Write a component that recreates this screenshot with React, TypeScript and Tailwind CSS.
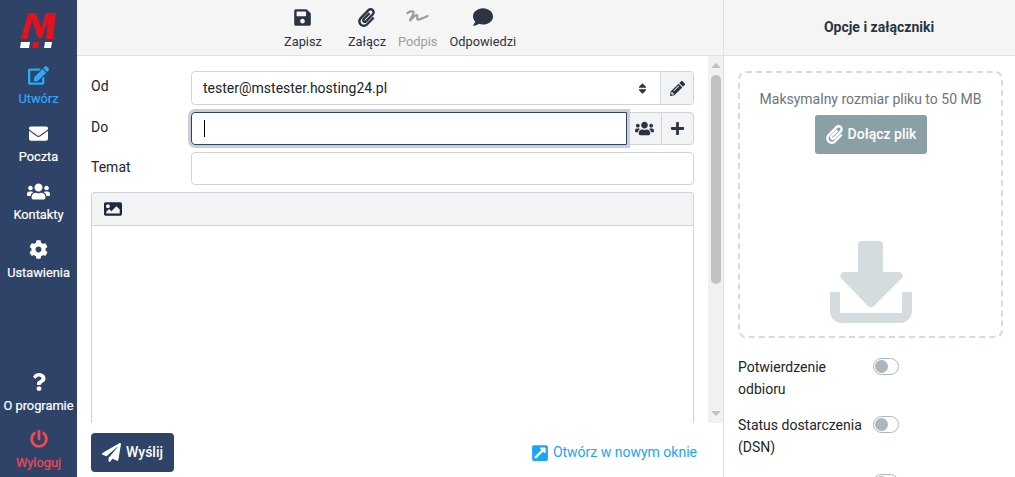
import type { ReactNode } from "react";
import {
  FaCog,
  FaComment,
  FaEdit,
  FaEnvelope,
  FaExternalLinkSquareAlt,
  FaImage,
  FaPaperPlane,
  FaPaperclip,
  FaPencilAlt,
  FaPlus,
  FaPowerOff,
  FaQuestion,
  FaSave,
  FaSort,
  FaUsers,
} from "react-icons/fa";

function SideItem({ icon, label, color = "text-white" }: { icon: ReactNode; label: string; color?: string }) {
  return (
    <div className={`flex flex-col items-center h-[58px] ${color}`}>
      <div className="h-[24px] flex items-center justify-center">{icon}</div>
      <span className="text-[12.8px] leading-[20px] mt-[2px] whitespace-nowrap [-webkit-text-stroke:0.2px]">{label}</span>
    </div>
  );
}

function ToolItem({ icon, label, muted }: { icon: ReactNode; label: string; muted?: boolean }) {
  return (
    <div className={`flex flex-col items-center ${muted ? "text-[#9a9da0]" : "text-[#2b3440]"}`}>
      <div className="h-[22px] flex items-center justify-center">{icon}</div>
      <span className="text-[12.8px] leading-[16px] mt-[6px]">{label}</span>
    </div>
  );
}

function Toggle() {
  return (
    <div className="w-[26px] h-[17px] rounded-full border border-[#adb5bd] bg-white flex items-center pl-[1px] shrink-0">
      <div className="w-[13px] h-[13px] rounded-full bg-[#adb5bd]" />
    </div>
  );
}

export default function App() {
  return (
    <div className="w-[1015px] h-[477px] flex overflow-hidden bg-white font-['Roboto',sans-serif]">
      {/* sidebar */}
      <div className="w-[77px] h-full bg-[#2f4369] flex flex-col items-center shrink-0">
        <svg width="37" height="35" viewBox="0 0 37 35" className="mt-[13px] mb-[15px]">
          <polygon points="1,26 8,0 16,0 21,15 26,0 36,0 33,26 26,26 28,7 22,25 18,25 12,7 7,26" fill="#e2131e" />
          <polygon points="1,29 10,29 9,35 0,35" fill="#fff" />
          <polygon points="13,29 19,29 18,35 12,35" fill="#e2131e" />
          <polygon points="25,29 32,29 31,35 24,35" fill="#fff" />
        </svg>
        <SideItem icon={<FaEdit className="text-[21px]" />} label="Utwórz" color="text-[#2ea8f5]" />
        <SideItem icon={<FaEnvelope className="text-[19px]" />} label="Poczta" />
        <SideItem icon={<FaUsers className="text-[23px]" />} label="Kontakty" />
        <SideItem icon={<FaCog className="text-[19px]" />} label="Ustawienia" />
        <div className="mt-auto flex flex-col items-center">
          <SideItem icon={<FaQuestion className="text-[18px]" />} label="O programie" />
          <div className="h-[50px] -mt-[1px]">
            <SideItem icon={<FaPowerOff className="text-[18px]" />} label="Wyloguj" color="text-[#f2494f]" />
          </div>
        </div>
      </div>

      {/* compose */}
      <div className="w-[647px] h-full flex flex-col border-r border-[#dee2e6] shrink-0">
        <div className="h-[56px] bg-[#f5f5f5] border-b border-[#dee2e6] flex pl-[207px] pt-[6px] shrink-0">
          <ToolItem icon={<FaSave className="text-[19px]" />} label="Zapisz" />
          <div className="ml-[26px]">
            <ToolItem icon={<FaPaperclip className="text-[19px]" />} label="Załącz" />
          </div>
          <div className="ml-[12px]">
            <ToolItem
              icon={
                <svg width="25" height="22" viewBox="5.5 1 25 22" fill="none">
                  <path
                    d="M8 8c2-1.500 5-2.500 6-1 1 2-3 6-3.500 8.500 2-1.500 5-6 7-5.500 1.500 .5-1 4 .5 4.500 2 .5 6-2 10-3.500"
                    stroke="currentColor"
                    strokeWidth="2.2"
                    strokeLinecap="round"
                    strokeLinejoin="round"
                  />
                </svg>
              }
              label="Podpis"
              muted
            />
          </div>
          <div className="ml-[12px]">
            <ToolItem icon={<FaComment className="text-[20px]" />} label="Odpowiedzi" />
          </div>
        </div>
        <div className="flex-1 flex min-h-0">
          <div className="flex-1 min-w-0 px-[14px] pt-[15px] flex flex-col">
            <div className="flex h-[34px] mb-[7px] text-[14px] text-[#212529]">
              <span className="w-[100px] leading-[30px]">Od</span>
              <div className="flex-1 flex border border-[#ced4da] rounded-[4px] overflow-hidden">
                <div className="flex-1 flex items-center justify-between px-[11px]">
                  <span>tester@mstester.hosting24.pl</span>
                  <FaSort className="text-[13px] text-[#2b3440]" />
                </div>
                <div className="w-[33px] bg-[#f1f3f5] border-l border-[#ced4da] flex items-center justify-center text-[#2b3440]">
                  <FaPencilAlt className="text-[15px]" />
                </div>
              </div>
            </div>
            <div className="flex h-[33px] mb-[7px] text-[14px] text-[#212529]">
              <span className="w-[100px] leading-[30px]">Do</span>
              <div className="flex-1 flex">
                <div className="flex-1 rounded-l-[4px] border border-[#2f4369] shadow-[0_0_0_3px_#c9ced8] flex items-center pl-[12px] z-10">
                  <div className="w-[1px] h-[17px] bg-black" />
                </div>
                <div className="w-[34px] bg-[#f1f3f5] border-y border-[#ced4da] flex items-center justify-center text-[#2b3440]">
                  <FaUsers className="text-[19px]" />
                </div>
                <div className="w-[33px] bg-[#f1f3f5] border border-[#ced4da] rounded-r-[4px] flex items-center justify-center text-[#2b3440]">
                  <FaPlus className="text-[15px]" />
                </div>
              </div>
            </div>
            <div className="flex h-[33px] mb-[7px] text-[14px] text-[#212529]">
              <span className="w-[100px] leading-[30px]">Temat</span>
              <div className="flex-1 border border-[#ced4da] rounded-[4px]" />
            </div>
            <div className="flex-1 border border-b-0 border-[#ced4da] rounded-t-[4px] flex flex-col min-h-0">
              <div className="h-[33px] bg-[#f1f3f5] border-b border-[#ced4da] rounded-t-[4px] flex items-center pl-[12px] pb-[1px] text-[#1f2a3a] shrink-0">
                <FaImage className="text-[18px]" />
              </div>
            </div>
          </div>
          {/* scrollbar */}
          <div className="w-[15px] bg-[#f1f1f1] flex flex-col items-center">
            <div className="w-0 h-0 mt-[7px] border-x-[5px] border-x-transparent border-b-[5px] border-b-[#c1c1c1]" />
            <div className="w-[10px] h-[209px] mt-[7px] bg-[#c1c1c1] rounded-full" />
            <div className="w-0 h-0 mt-auto mb-[7px] border-x-[5px] border-x-transparent border-t-[5px] border-t-[#c1c1c1]" />
          </div>
        </div>
        <div className="h-[54px] flex items-start justify-between shrink-0 pl-[14px] pr-[26px] pt-[10px]">
          <div className="h-[39px] w-[83px] rounded-[4px] bg-[#2f4369] text-white text-[14px] font-medium flex items-center justify-center gap-[5px]">
            <FaPaperPlane className="text-[19px]" />
            Wyślij
          </div>
          <div className="flex items-center gap-[4px] text-[14px] text-[#1aa5f5] h-[39px]">
            <FaExternalLinkSquareAlt className="text-[18px]" />
            Otwórz w nowym oknie
          </div>
        </div>
      </div>

      {/* options */}
      <div className="flex-1 min-w-0 flex flex-col">
        <div className="h-[56px] bg-[#f5f5f5] border-b border-[#dee2e6] flex items-center justify-center pl-[19px] text-[14px] font-bold text-[#2b3440] shrink-0">
          Opcje i załączniki
        </div>
        <div className="pl-[14px] pr-[12px] pt-[15px]">
          <div className="h-[267px] border-2 border-dashed border-[#d5dcdf] rounded-[8px] flex flex-col items-center pt-[16px]">
            <span className="text-[14px] leading-[20px] text-[#6c757d]">Maksymalny rozmiar pliku to 50 MB</span>
            <div className="mt-[6px] h-[39px] w-[112px] rounded-[3px] bg-[#8a9fa6] text-white text-[14px] font-medium flex items-center justify-center gap-[4px]">
              <FaPaperclip className="text-[19px]" />
              Dołącz plik
            </div>
            <svg width="82" height="82" viewBox="0 0 82 82" className="mt-[87px] text-[#d5dcdf]" fill="currentColor">
              <path d="M32 0h17a4 4 0 0 1 4 4v27h16c3 0 5 4 3 6L44 65a4 4 0 0 1-6 0L11 37c-2-2 0-6 3-6h14V4a4 4 0 0 1 4-4z" />
              <path d="M0 51h10v21h62V51h10v19a12 12 0 0 1-12 12H12A12 12 0 0 1 0 70z" />
            </svg>
          </div>
          <div className="mt-[18px] flex flex-col gap-[14px] text-[14px] leading-[22px] text-[#212529]">
            <div className="flex">
              <span className="w-[135px]">Potwierdzenie odbioru</span>
              <div className="pt-[2px]">
                <Toggle />
              </div>
            </div>
            <div className="flex">
              <span className="w-[135px]">Status dostarczenia (DSN)</span>
              <div className="pt-[2px]">
                <Toggle />
              </div>
            </div>
            <div className="flex">
              <span className="w-[135px]" />
              <div className="pt-[2px]">
                <Toggle />
              </div>
            </div>
          </div>
        </div>
      </div>
    </div>
  );
}
